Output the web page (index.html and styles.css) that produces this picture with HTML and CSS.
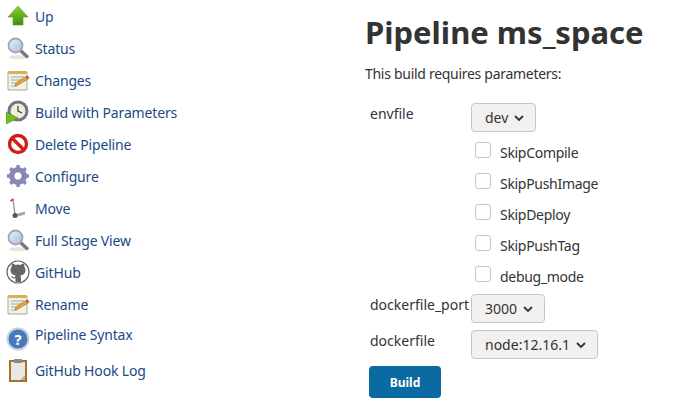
FILE: index.html
```html
<!DOCTYPE html>
<html lang="en">

<head>
    <meta charset="UTF-8">
    <meta name="viewport" content="width=device-width, initial-scale=1.0">
    <title>Pipeline ms_space</title>
    <link rel="stylesheet" href="styles.css">
</head>

<body>
    <svg class="defs" width="0" height="0">
        <defs>
            <linearGradient id="lens" x1="0" y1="0" x2="1" y2="1">
                <stop offset="0" stop-color="#eef4fb" />
                <stop offset="1" stop-color="#9dbce0" />
            </linearGradient>
            <linearGradient id="arrow" x1="0" y1="0" x2="0" y2="1">
                <stop offset="0" stop-color="#8ad13a" />
                <stop offset="1" stop-color="#3f8f0a" />
            </linearGradient>
            <symbol id="magnifier" viewBox="0 0 24 24">
                <ellipse cx="12" cy="21" rx="9" ry="2" fill="#e4e4e4" />
                <path d="M14.5 14.5l6.5 6" stroke="#777" stroke-width="3.4" stroke-linecap="round" />
                <circle cx="9.5" cy="9.5" r="7" fill="url(#lens)" stroke="#a3a8ad" stroke-width="1.8" />
            </symbol>
            <symbol id="notepad" viewBox="0 0 24 24">
                <path d="M2 4h19v18H2z" fill="#f3f1e6" stroke="#a9a89f" />
                <path d="M2.5 3h18v3h-18z" fill="#d3b45a" />
                <path d="M5 9h13M5 12h11M5 15h8M5 18h6" stroke="#a5a5a0" />
                <path d="M9 18l1-3L20 8.500l2 2.500-10 6z" fill="#e8a23c" stroke="#a8651f" stroke-width=".6" />
                <path d="M20 8.500l2 2.500 1.500-1-2-2.500z" fill="#c9423a" />
            </symbol>
        </defs>
    </svg>

    <div class="layout">
        <nav class="side-panel">
            <a class="task" href="#">
                <svg class="icon" viewBox="0 0 24 24">
                    <path d="M12 2L22 13h-5v8H7v-8H2z" fill="url(#arrow)" stroke="#5d9c1c" stroke-width=".6" />
                </svg>
                Up
            </a>
            <a class="task" href="#">
                <svg class="icon"><use href="#magnifier" /></svg>
                Status
            </a>
            <a class="task" href="#">
                <svg class="icon"><use href="#notepad" /></svg>
                Changes
            </a>
            <a class="task" href="#">
                <svg class="icon" viewBox="0 0 24 24">
                    <circle cx="12" cy="11" r="10.500" fill="#77728a" />
                    <circle cx="12" cy="11" r="7.500" fill="#f2edd9" />
                    <path d="M12 6v5l4 2" stroke="#444" stroke-width="1.300" fill="none" />
                    <path d="M0 12l12 6L0 24z" fill="#6cc024" stroke="#3e8410" stroke-width=".6" />
                </svg>
                Build with Parameters
            </a>
            <a class="task" href="#">
                <svg class="icon" viewBox="0 0 24 24">
                    <circle cx="12" cy="12" r="8.500" fill="#fff" stroke="#d0201c" stroke-width="3.400" />
                    <path d="M6 6l12 12" stroke="#d0201c" stroke-width="3.400" />
                </svg>
                Delete Pipeline
            </a>
            <a class="task" href="#">
                <svg class="icon" viewBox="0 0 24 24">
                    <circle cx="12" cy="12" r="6.500" fill="none" stroke="#8589b6" stroke-width="5" />
                    <path d="M12 1v22M1 12h22M4.200 4.200l15.600 15.600M19.800 4.200L4.200 19.800" stroke="#8589b6" stroke-width="3.400" />
                    <circle cx="12" cy="12" r="4.200" fill="#fff" stroke="#5f6594" stroke-width=".8" />
                </svg>
                Configure
            </a>
            <a class="task" href="#">
                <svg class="icon" viewBox="0 0 24 24">
                    <path d="M7 4l2 14" stroke="#999" stroke-width="1.400" />
                    <path d="M4.500 5l3-2" stroke="#c0393b" stroke-width="1.600" />
                    <path d="M10 18l9-2.500v3L10 21z" fill="#a8a89a" />
                    <circle cx="9" cy="19.500" r="2.500" fill="#555" />
                </svg>
                Move
            </a>
            <a class="task" href="#">
                <svg class="icon"><use href="#magnifier" /></svg>
                Full Stage View
            </a>
            <a class="task" href="#">
                <svg class="icon" viewBox="0 0 24 24">
                    <circle cx="12" cy="12" r="11" fill="#fff" stroke="#666" stroke-width="1.200" />
                    <path d="M9.500 22v-3.500c-3.500.5-4-1.500-4.500-2.500 1.500 0 2 1.500 4 1.500 0-1 .3-1.500.8-2-3-.5-5.300-2-5.300-5.500 0-1.300.5-2.300 1.200-3.200C5.500 5.500 5.700 4 6.200 3.500c1.300 0 2.500.8 3.200 1.400a9 9 0 0 1 5.200 0c.7-.6 1.900-1.400 3.200-1.400.5.500.7 2 .5 3.300.7.900 1.200 1.900 1.200 3.200 0 3.500-2.300 5-5.300 5.500.5.500.8 1.200.8 2.200V22z" fill="#666" />
                </svg>
                GitHub
            </a>
            <a class="task" href="#">
                <svg class="icon"><use href="#notepad" /></svg>
                Rename
            </a>
            <a class="task task-syntax" href="#">
                <svg class="icon" viewBox="0 0 24 24">
                    <circle cx="12" cy="12" r="10.500" fill="#4a78b8" stroke="#c3d2e6" stroke-width="2" />
                    <text class="help-mark" x="12" y="17.500" text-anchor="middle">?</text>
                </svg>
                Pipeline Syntax
            </a>
            <a class="task task-log" href="#">
                <svg class="icon" viewBox="0 0 24 24">
                    <path d="M3 2h18v22H3z" fill="#a9702b" />
                    <path d="M5 4h14v18H5z" fill="#e8e8e4" />
                    <path d="M8 1h8v4H8z" fill="#8b8b86" />
                    <path d="M14 22l5-5v5z" fill="#b5b5b0" />
                </svg>
                GitHub Hook Log
            </a>
        </nav>

        <main class="main-panel">
            <h1>Pipeline ms_space</h1>
            <p class="intro">This build requires parameters:</p>

            <form class="params" onsubmit="return false;">
                <div class="param param-first">
                    <label class="param-name">envfile</label>
                    <button class="select" type="button">dev
                        <svg class="chevron" viewBox="0 0 10 6"><path d="M1 1l4 4 4-4" /></svg>
                    </button>
                </div>

                <label class="check"><input type="checkbox"><span>SkipCompile</span></label>
                <label class="check"><input type="checkbox"><span>SkipPushImage</span></label>
                <label class="check"><input type="checkbox"><span>SkipDeploy</span></label>
                <label class="check"><input type="checkbox"><span>SkipPushTag</span></label>
                <label class="check"><input type="checkbox"><span>debug_mode</span></label>

                <div class="param param-port">
                    <label class="param-name">dockerfile_port</label>
                    <button class="select" type="button">3000
                        <svg class="chevron" viewBox="0 0 10 6"><path d="M1 1l4 4 4-4" /></svg>
                    </button>
                </div>
                <div class="param">
                    <label class="param-name">dockerfile</label>
                    <button class="select" type="button">node:12.16.1
                        <svg class="chevron" viewBox="0 0 10 6"><path d="M1 1l4 4 4-4" /></svg>
                    </button>
                </div>

                <button class="build-btn" type="submit">Build</button>
            </form>
        </main>
    </div>
</body>

</html>
```

FILE: styles.css
```css
html,
body {
    margin: 0;
    height: 404px;
    overflow: hidden;
}

body {
    background-color: #fff;
    color: #333;
    font-family: 'Noto Sans', 'Open Sans', sans-serif;
    font-size: 14px;
}

.defs {
    display: block;
    height: 0;
}

.layout {
    display: flex;
}

.side-panel {
    width: 365px;
    flex-shrink: 0;
    display: flex;
    flex-direction: column;
    letter-spacing: -0.15px;
}

.task {
    height: 32px;
    display: flex;
    align-items: center;
    gap: 5px;
    padding-left: 6px;
    color: #204a87;
    text-decoration: none;
}

.icon {
    width: 24px;
    height: 24px;
    flex-shrink: 0;
}

.task-syntax {
    height: 28px;
}

.task-syntax .icon {
    margin-top: 10px;
}

.task-log {
    height: 44px;
}

.help-mark {
    fill: #fff;
    font-size: 15px;
    font-weight: bold;
}

.main-panel {
    flex: 1;
}

h1 {
    margin: 10px 0 0;
    font-size: 31px;
    line-height: 44px;
    font-weight: bold;
}

.intro {
    margin: 10px 0 0;
    line-height: 20px;
    letter-spacing: -0.29px;
}

.params {
    margin-top: 19px;
    padding-left: 5px;
    display: flex;
    flex-direction: column;
}

.param {
    display: flex;
    margin-top: 7px;
}

.param-first {
    margin-top: 0;
    margin-bottom: 5px;
}

.param-port {
    margin-top: 2px;
}

.param-name {
    width: 101px;
    padding-top: 1px;
    line-height: 20px;
}

.select {
    height: 29px;
    padding: 0 11px 0 13px;
    display: flex;
    align-items: center;
    gap: 6px;
    border: 1px solid #c9c6c0;
    border-radius: 4px;
    background-color: #f2f1ef;
    color: #333;
    font-family: inherit;
    font-size: 14px;
}

.chevron {
    width: 10px;
    height: 6px;
    fill: none;
    stroke: #333;
    stroke-width: 1.800;
}

.check {
    height: 31px;
    padding-left: 105px;
    display: flex;
    align-items: center;
    letter-spacing: -0.3px;
}

.check input {
    appearance: none;
    width: 16px;
    height: 16px;
    margin: 0 9px 5px 0;
    border: 1px solid #c9c6c0;
    border-radius: 3px;
    background-color: #fff;
}

.build-btn {
    width: 72px;
    height: 32px;
    margin: 7px 0 0 -1px;
    border: none;
    border-radius: 4px;
    background-color: #0b6aa2;
    color: #fff;
    font-family: inherit;
    font-size: 12px;
    font-weight: bold;
}
```
